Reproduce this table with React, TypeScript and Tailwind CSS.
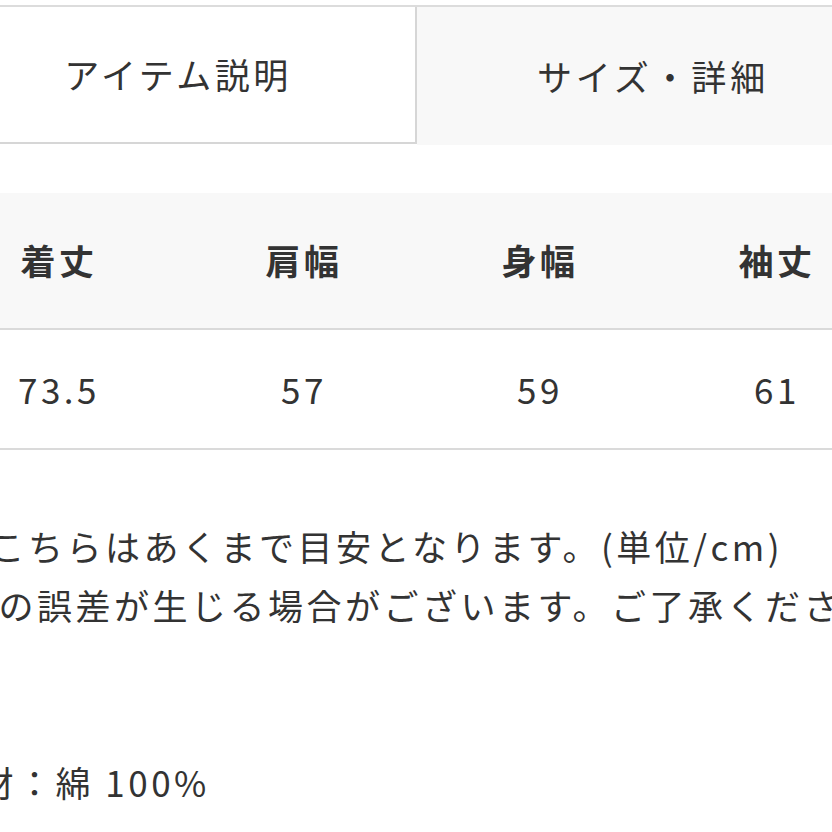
const sizes = [
  { label: "着丈", value: "73.5", width: "w-[236px]" },
  { label: "肩幅", value: "57", width: "w-[254px]" },
  { label: "身幅", value: "59", width: "w-[218px]" },
  { label: "袖丈", value: "61", width: "w-[256px]" },
];

export default function App() {
  return (
    <main className="h-[832px] w-[832px] overflow-hidden bg-white font-['Noto_Sans_CJK_JP',sans-serif] text-[#333]">
      <div className="ml-[-59px] w-[964px]">
        {/* tabs */}
        <div className="mt-[5px] flex border-t-2 border-[#dcdcdc]">
          <div className="flex h-[137px] w-[476px] items-center justify-center border-r-2 border-b-2 border-[#d6d6d6] bg-white text-[35px] tracking-[0.1em]">
            アイテム説明
          </div>
          <div className="flex h-[138px] w-[488px] items-center bg-[#f8f8f8] pl-[120px] text-[35px] tracking-[0.11em]">
            サイズ・詳細
          </div>
        </div>

        {/* size table */}
        <div className="mt-[48px]">
          <div className="flex h-[137px] items-center border-b-2 border-[#dadada] bg-[#f8f8f8]">
            {sizes.map((s) => (
              <div key={s.label} className={`${s.width} text-center text-[35px] font-bold tracking-[0.1em]`}>
                {s.label}
              </div>
            ))}
          </div>
          <div className="flex h-[120px] items-center border-b-2 border-[#dadada]">
            {sizes.map((s) => (
              <div key={s.label} className={`${s.width} text-center text-[35px] tracking-[0.1em]`}>
                {s.value}
              </div>
            ))}
          </div>
        </div>
      </div>

      {/* notes */}
      <div className="mt-[66px] whitespace-nowrap text-[35px] leading-[59px] tracking-[0.1em]">
        <p className="ml-[-49px]">※こちらはあくまで目安となります。(単位/cm)</p>
        <p className="ml-[-117px]">※多少の誤差が生じる場合がございます。ご了承ください。</p>
        <p className="mt-[118px] ml-[-60px]">素材：綿 100%</p>
      </div>
    </main>
  );
}
